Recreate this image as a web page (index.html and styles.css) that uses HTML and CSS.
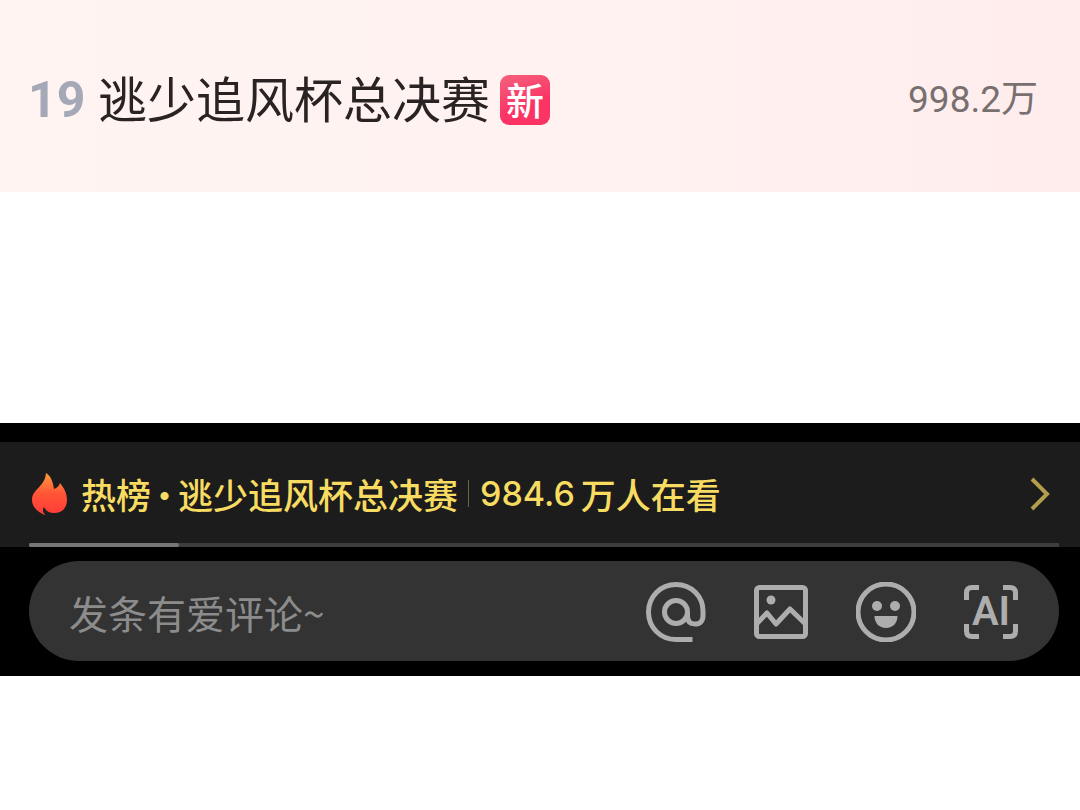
FILE: index.html
```
<!DOCTYPE html>
<html lang="zh-CN">
<head>
    <meta charset="UTF-8">
    <meta name="viewport" content="width=device-width, initial-scale=1.0">
    <title>热榜</title>
    <link rel="stylesheet" href="styles.css">
</head>
<body>
    <div class="rank-item">
        <span class="rank">19</span>
        <span class="title">逃少追风杯总决赛</span>
        <span class="tag">新</span>
        <span class="heat">998.2万</span>
    </div>

    <div class="player">
        <a class="hot-bar" href="#">
            <svg class="fire" viewBox="0 0 36 42" aria-hidden="true">
                <defs>
                    <linearGradient id="fire" x1="0" y1="0" x2="0" y2="1">
                        <stop offset="0" stop-color="#ff9a3c"/>
                        <stop offset="0.5" stop-color="#ff5436"/>
                        <stop offset="1" stop-color="#ff3b38"/>
                    </linearGradient>
                </defs>
                <path fill="url(#fire)" d="M14 0C19 3 21 9 22 16C25 15 27 13 28 10C32 15 35 20 35 27C35 35 30 40 22 40C17 40 14 38 12 34C10 37 11 40 14 42C6 40 0 34 0 27C0 16 13 14 14 0Z"/>
            </svg>
            <span class="board">热榜</span>
            <span class="dot">·</span>
            <span class="topic">逃少追风杯总决赛</span>
            <span class="line"></span>
            <span class="number">984.6</span>
            <span class="watching">万人在看</span>
            <svg class="arrow" viewBox="0 0 20 34" aria-hidden="true">
                <path d="M2 2L17 17L2 32"/>
            </svg>
        </a>
        <div class="progress"><div class="played"></div></div>

        <div class="comment">
            <input type="text" placeholder="发条有爱评论~" aria-label="发条有爱评论">
            <button type="button" aria-label="提到">
                <svg viewBox="0 0 60 60">
                    <circle cx="30" cy="30" r="11.5"/>
                    <path d="M46.500 57.500H30C14 57.500 2.500 45 2.500 30C2.500 14.500 14.500 2.500 30 2.500C45.500 2.500 57 14.500 57 29V34C57 39 54 42 49 42C44 42 41.500 39 41.500 34V30"/>
                </svg>
            </button>
            <button type="button" aria-label="图片">
                <svg viewBox="0 0 60 60">
                    <rect x="5.500" y="5.500" width="49" height="49" rx="3"/>
                    <path d="M5.500 42L16 31L25 42L39 27L54.500 42"/>
                    <circle class="solid" cx="20" cy="18" r="4.500"/>
                </svg>
            </button>
            <button type="button" aria-label="表情">
                <svg viewBox="0 0 60 60">
                    <circle cx="30" cy="30" r="28"/>
                    <circle class="solid" cx="21" cy="24" r="5"/>
                    <circle class="solid" cx="39" cy="24" r="5"/>
                    <path class="solid" d="M18.500 34H41.500C41.500 41 37 46 30 46C23 46 18.500 41 18.500 34Z"/>
                </svg>
            </button>
            <button type="button" class="ai">
                <svg viewBox="0 0 60 60" aria-hidden="true">
                    <path d="M5.500 18V11Q5.500 5.500 11 5.500H18M42 5.500H49Q54.500 5.500 54.500 11V18M54.500 42V49Q54.500 54.500 49 54.500H42M18 54.500H11Q5.500 54.500 5.500 49V42"/>
                </svg>
                <span>AI</span>
            </button>
        </div>
    </div>
</body>
</html>
```
FILE: styles.css
```
body {
    margin: 0;
    background-color: white;
    font-family: Roboto, "Noto Sans CJK SC", sans-serif;
}
.rank-item {
    display: flex;
    align-items: center;
    height: 192px;
    padding: 8px 42px 0 28px;
    box-sizing: border-box;
    background: linear-gradient(to right, #fff4f2, #fff2f0 60%, #ffeced);
    line-height: 60px;
    white-space: nowrap;
}
.rank {
    width: 70px;
    font-size: 50px;
    font-weight: bold;
    color: #a5a8b7;
}
.title {
    padding-top: 4px;
    font-size: 49px;
    color: #292323;
}
.tag {
    width: 50px;
    height: 50px;
    margin-left: 10px;
    border-radius: 9px;
    background: linear-gradient(160deg, #f4627e, #fb3465 60%);
    color: white;
    font-size: 38px;
    font-weight: 500;
    line-height: 54px;
    text-align: center;
}
.heat {
    margin-left: auto;
    font-size: 37px;
    color: #787070;
}
.player {
    margin-top: 231px;
    padding: 19px 0 15px;
    background-color: black;
}
.hot-bar {
    display: flex;
    align-items: center;
    height: 101px;
    padding: 2px 30px 0 32px;
    box-sizing: border-box;
    background-color: #1c1c1c;
    color: #f8dc62;
    font-family: "Noto Sans CJK SC", sans-serif;
    font-size: 35px;
    font-weight: 500;
    line-height: 50px;
    text-decoration: none;
    white-space: nowrap;
}
.fire {
    width: 36px;
    height: 42px;
    margin-right: 13px;
}
.dot {
    display: flex;
    justify-content: center;
    width: 27px;
}
.line {
    width: 1px;
    height: 27px;
    margin: 0 11px 0 10px;
    background-color: #70673f;
}
.number {
    margin-right: 6px;
    font-family: Inter, sans-serif;
    font-size: 34px;
}
.arrow {
    width: 20px;
    height: 34px;
    margin-left: auto;
    fill: none;
    stroke: #b29d4c;
    stroke-width: 4;
}
.progress {
    height: 4px;
    padding: 0 21px 0 29px;
    background: linear-gradient(#3d3d3d, #3d3d3d) content-box, #1c1c1c;
}
.played {
    width: 150px;
    height: 4px;
    border-radius: 2px;
    background-color: #777;
}
.comment {
    display: flex;
    align-items: center;
    gap: 45px;
    height: 100px;
    margin: 14px 21px 0 29px;
    padding: 2px 38px 0 40px;
    box-sizing: border-box;
    border-radius: 50px;
    background-color: #333;
}
.comment input {
    flex: 1;
    min-width: 0;
    height: 60px;
    padding: 0;
    border: none;
    outline: none;
    background: none;
    color: #ddd;
    font-family: "Noto Sans CJK SC", sans-serif;
    font-size: 39px;
}
.comment input::placeholder {
    color: #8c8c8c;
    opacity: 1;
}
.comment button {
    display: grid;
    place-items: center;
    width: 60px;
    height: 60px;
    padding: 0;
    border: none;
    background: none;
    color: #adadad;
    cursor: pointer;
}
.comment button > * {
    grid-area: 1 / 1;
}
.comment svg {
    width: 60px;
    height: 60px;
    fill: none;
    stroke: currentColor;
    stroke-width: 5;
    stroke-linejoin: round;
}
.comment .solid {
    fill: currentColor;
    stroke: none;
}
.ai span {
    font-family: Roboto, sans-serif;
    font-size: 40px;
    font-weight: 600;
    line-height: 60px;
}
```
